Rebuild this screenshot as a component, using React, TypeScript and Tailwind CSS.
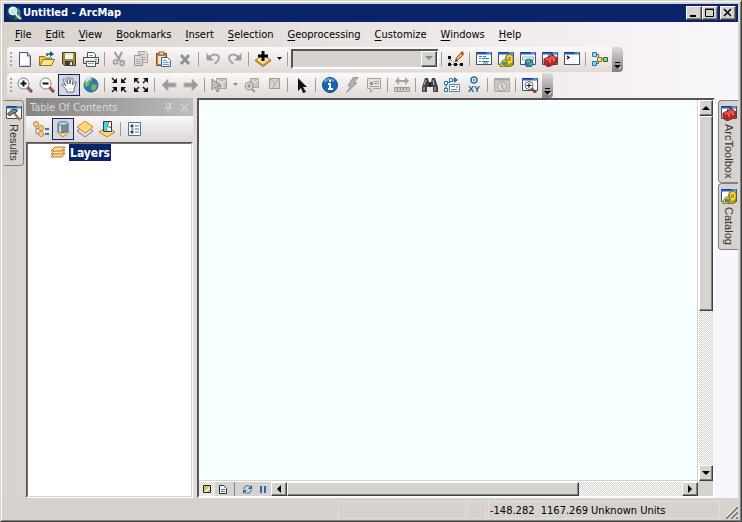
import type { ReactNode } from 'react';

const Svg = ({ children, w = 16, h = 16 }: { children: ReactNode; w?: number; h?: number }) => (
  <svg width={w} height={h} viewBox={`0 0 ${w} ${h}`} fill="none" className="shrink-0" aria-hidden="true">
    {children}
  </svg>
);

const AppIcon = () => (
  <Svg>
    <circle cx="8" cy="8" r="7.500" fill="#123d52" />
    <path d="M2 4l4-3 3 1-3 4-4 3zM10 9l5-1-2 5-4 2z" fill="#2f8a55" />
    <path d="M11 2l3 3v3h-2z" fill="#3b96b5" />
    <circle cx="7" cy="6" r="4" fill="#bfe6f4" stroke="#e8f4f8" />
    <path d="M4.500 5a3 3 0 013-2" stroke="#fff" strokeWidth="1.500" />
    <path d="M10 9l5 5" stroke="#eee8da" strokeWidth="2.500" />
    <path d="M11 9l4 4" stroke="#c87d40" />
  </Svg>
);

const NewIcon = () => (
  <Svg>
    <path d="M2.500 1.500h8l3 3v11h-11z" fill="#f4faff" stroke="#4a5b70" />
    <path d="M4 3h5v10H4z" fill="#fff" />
    <path d="M10.500 1.500v3.500h3.500" fill="#c9d9ea" stroke="#4a5b70" />
    <path d="M12.500 6v8.500H5" stroke="#c1d5e8" />
  </Svg>
);

const OpenIcon = () => (
  <Svg>
    <path d="M.5 14.500v-9h5l1 1.500h6v7.500z" fill="#efc64e" stroke="#957019" />
    <path d="M1 14.500l3-6h11.500l-3 6z" fill="#ffe58c" stroke="#957019" />
    <path d="M8 5V3h4" stroke="#17569b" strokeWidth="1.500" />
    <path d="M11 0l4 3-4 3z" fill="#17569b" />
  </Svg>
);

const SaveIcon = () => (
  <Svg>
    <path d="M1.500 1.500h13v13h-11l-2-2z" fill="#a68b30" stroke="#453f2a" />
    <path d="M4 2h8v6H4z" fill="#f4f4ee" />
    <path d="M4 10h8v5H4z" fill="#3d3e3d" />
    <path d="M9 11h2v3H9z" fill="#eee" />
    <path d="M4 3h8" stroke="#d5d5cc" />
  </Svg>
);

const PrintIcon = () => (
  <Svg>
    <path d="M4.500 7V1.500h6l2 2V7" fill="#fff" stroke="#40566a" />
    <path d="M.5 6.500h15v6H.5z" fill="#d7d6cf" stroke="#454a50" />
    <path d="M1 7h14v2H1z" fill="#f6f5ee" />
    <path d="M3.500 10.500h9v5h-9z" fill="#fff" stroke="#4a5360" />
    <path d="M5 12.500h6M6 4.500h4" stroke="#7f9fc0" />
    <path d="M12 8h2v1h-2z" fill="#47a54b" />
  </Svg>
);

const CutIcon = () => (
  <Svg>
    <path d="M3.500 1L9 10M11 1L7 9" stroke="#9b9996" strokeWidth="2" />
    <circle cx="4.500" cy="11" r="2" stroke="#9b9996" strokeWidth="1.500" />
    <circle cx="11" cy="12.500" r="2" stroke="#9b9996" strokeWidth="1.500" />
    <path d="M7 9l7 1" stroke="#aaa8a5" strokeWidth="1.500" />
  </Svg>
);

const CopyIcon = () => (
  <Svg>
    <path d="M5.500.5h7l2 2v9h-9z" fill="#dedbd8" stroke="#a5a29e" />
    <path d="M1.500 4.500h6l2 2v8h-8z" fill="#dedbd8" stroke="#989693" />
    <path d="M7 3.500h5M10 6.500h3M10 8.500h3M3 8.500h5M3 10.500h5M3 12.500h5" stroke="#aaa7a4" />
  </Svg>
);

const PasteIcon = () => (
  <Svg>
    <path d="M1.500 2.500h10v12h-10z" fill="#cf8034" stroke="#875023" />
    <path d="M4 1h5v3H4z" fill="#ead9a8" stroke="#81643b" />
    <path d="M3 5h7v8H3z" fill="#eee3d2" />
    <path d="M6.500 6.500h6l3 3v6h-9z" fill="#f6fbff" stroke="#376193" />
    <path d="M8 9.500h4M8 11.500h6M8 13.500h6" stroke="#679bd0" />
  </Svg>
);

const DeleteIcon = () => (
  <Svg>
    <path d="M4 4l8 9M12 4l-8 9" stroke="#929292" strokeWidth="3" />
  </Svg>
);

const TurnIcon = ({ redo }: { redo?: boolean }) => (
  <Svg>
    <g transform={redo ? 'translate(16 0) scale(-1 1)' : undefined}>
      <path d="M4 7c4-5 10-4 10 0 0 3-3 4-4 6" stroke="#a5a2a0" strokeWidth="2" />
      <path d="M1.500 2v7.500H9z" fill="#a09d9b" />
    </g>
  </Svg>
);

const AddDataIcon = () => (
  <Svg>
    <path d="M0 9.500l8-6 8 6-8 6z" fill="#e0a13c" stroke="#8f6a2c" />
    <path d="M2 8.500L8 4l6 4.500L8 13z" fill="#ffe29b" />
    <path d="M8 0v10M3 5h10" stroke="#000" strokeWidth="3" />
  </Svg>
);

const EditorIcon = () => (
  <Svg>
    <path d="M1.500 7v6.500h13M2 8l5 5" stroke="#555" strokeDasharray="1 1" />
    <path d="M0 5h3v3H0zM0 12h3v3H0zM6 12h3v3H6zM12 12h3v3h-3z" fill="#111" />
    <path d="M7.500 10.500l1-4 5-5 2 2-5 5z" fill="#eebb52" stroke="#75552a" />
    <path d="M12.500 2l1.500-2 2 2-1.500 2z" fill="#c54038" />
    <path d="M7 11l1-3 2 2z" fill="#333" />
  </Svg>
);

const Frame = () => (
  <>
    <path d="M.5 1.500h15v12H.5z" fill="#fff" stroke="#46505e" />
    <path d="M0 1h16v2.500H0z" fill="#2460bd" />
    <path d="M1 1.500h9" stroke="#173d8e" />
    <path d="M11 2h4" stroke="#8fb5e5" />
  </>
);

const TableIcon = () => (
  <Svg>
    <Frame />
    <path d="M3 5.500h3M7 5.500h3M6 7.500h7M6 10.500h7" stroke="#2875ce" />
    <path d="M3 7.500h2" stroke="#d04237" />
    <path d="M3 10.500h2M7 12h5" stroke="#2c9b4c" />
  </Svg>
);

const CatalogIcon = () => (
  <Svg>
    <Frame />
    <path d="M8 5l4-2 3 2v9l-4 2H7z" fill="#b99f16" stroke="#70610e" />
    <path d="M8.500 5.500l3-2 3 1.500v6l-4 2z" fill="#f1dc4c" />
    <path d="M10 7h3M10 9h3" stroke="#756713" />
    <path d="M2 13l3-4h4l-1 5-3 1.500H2z" fill="#dfc931" stroke="#8f801a" />
    <path d="M4 11h4v3H4z" fill="#2d94a3" />
  </Svg>
);

const SearchIcon = () => (
  <Svg>
    <Frame />
    <path d="M2.500 6h11v3h-11z" fill="#eef5fb" stroke="#8dabc6" />
    <circle cx="9" cy="12" r="4" fill="#267ac1" stroke="#24639a" />
    <path d="M6 10l3-2 1 2-2 2zM9 13l3-2v3l-2 1z" fill="#68bc56" />
  </Svg>
);

const ToolboxIcon = () => (
  <Svg>
    <Frame />
    <path d="M2 8l9-4 4 3v5l-9 4-4-3z" fill="#be2b25" stroke="#85231f" />
    <path d="M2.500 8l8-3.500 4 2.500L6 10z" fill="#e0554b" />
    <path d="M6.500 7V4.500l4-1.500v2" stroke="#792621" />
    <path d="M6 10v5" stroke="#8f211d" />
    <path d="M8 9.500v2M12 8v2" stroke="#f2c5bd" />
  </Svg>
);

const PythonIcon = () => (
  <Svg>
    <Frame />
    <path d="M3 5l2 1.500L3 8" stroke="#111" strokeWidth="1.500" />
  </Svg>
);

const ModelIcon = () => (
  <Svg>
    <path d="M5 3.500h1.500v9H5M7 8h6" stroke="#4e5354" />
    <path d="M.5 1.500h4v4h-4zM.5 10.500h4v4h-4z" fill="#8cd4fb" stroke="#1f76b9" />
    <path d="M5.500 6.500h4v4h-4z" fill="#ffe58c" stroke="#9a691f" />
    <path d="M11.500 6.500h4v4h-4z" fill="#8ad171" stroke="#247335" />
  </Svg>
);

const MagnifierIcon = ({ plus }: { plus?: boolean }) => (
  <Svg>
    <path d="M10 10l5 5" stroke="#783c38" strokeWidth="3" />
    <path d="M10 10l4 4" stroke="#d28a79" />
    <circle cx="6.500" cy="6.500" r="5.500" fill="#fafcff" stroke="#777d87" />
    <path d="M3.500 6.500h6" stroke="#111" strokeWidth="2" />
    {plus && <path d="M6.500 3.500v6" stroke="#111" strokeWidth="2" />}
  </Svg>
);

const HandIcon = () => (
  <Svg>
    <path
      d="M6 15c0-3-2-4-5-7 0-2 2-1 4 1L2 3c0-2 2-1 2 0l3 4-1-6c0-1 2-1 2 0l1 6 1-5c0-2 2-1 2 0l-.5 6L14 5c1-1 2 0 1 1l-2 6v3z"
      fill="#fff"
      stroke="#4b5160"
      strokeWidth=".8"
    />
    <path d="M7 12h4" stroke="#c6cdd8" />
  </Svg>
);

const GlobeIcon = () => (
  <Svg>
    <circle cx="8" cy="8" r="7" fill="#2a77be" stroke="#2b5d90" />
    <path d="M3 3l4-2 3 2-3 2-1 3-3 2-2-3zM9 7l5 1-1 4-3 2-2-3z" fill="#79b84b" />
    <path d="M3 5c1-3 4-4 5-3" stroke="#c3e9fa" strokeWidth="2" />
  </Svg>
);

const ArrowsIcon = ({ out }: { out?: boolean }) => (
  <Svg>
    {[0, 90, 180, 270].map((angle) => (
      <g key={angle} transform={`rotate(${angle} 8 8)`}>
        {out ? (
          <>
            <path d="M1 1h5L1 6z" fill="#111" />
            <path d="M3 3l3 3" stroke="#111" strokeWidth="1.500" />
          </>
        ) : (
          <>
            <path d="M6 1v5H1z" fill="#111" />
            <path d="M1 1l4 4" stroke="#111" strokeWidth="1.500" />
          </>
        )}
      </g>
    ))}
  </Svg>
);

const NavIcon = ({ next }: { next?: boolean }) => (
  <Svg>
    <path
      d="M1 8l6-6v4h8v4H7v4z"
      fill="#9c9b99"
      stroke="#b8b5b2"
      transform={next ? 'translate(16 0) scale(-1 1)' : undefined}
    />
  </Svg>
);

const SelectFeaturesIcon = () => (
  <Svg>
    <path d="M5.500 1.500h10v10h-10z" fill="#c4c1bd" stroke="#a5a29f" />
    <path d="M6 3l5 3 4-3M11 6l1 5" stroke="#e6e3e0" strokeWidth="1.500" />
    <path d="M1 2v11l3-3 2 5 2-1-2-5h4z" fill="#c6c3c0" stroke="#8b8885" />
  </Svg>
);

const ZoomSelectedIcon = () => (
  <Svg>
    <path d="M6.500 1.500h8v9h-8z" fill="#c9c6c2" stroke="#aaa7a4" />
    <path d="M8 2l3 4 3-3" stroke="#eee" />
    <circle cx="5" cy="9" r="4" fill="#dddad7" stroke="#989693" />
    <path d="M8 12l3 3" stroke="#989693" strokeWidth="2" />
    <path d="M3 9h4M5 7v4" stroke="#888683" />
  </Svg>
);

const ClearSelectedIcon = () => (
  <Svg>
    <path d="M3.500 1.500h10v10h-10z" fill="#d8d5d1" stroke="#9f9c99" />
    <path d="M4 2l5 4 4-4M9 6l-2 5" stroke="#a5a29f" />
  </Svg>
);

const PointerIcon = () => (
  <Svg>
    <path d="M4 1v13l3-3 2 5 3-1-3-5h4z" fill="#111" />
  </Svg>
);

const InfoIcon = () => (
  <Svg>
    <circle cx="8" cy="8" r="7.500" fill="#1c63b7" stroke="#174a86" />
    <path d="M3 5c1-3 6-4 9-1" stroke="#6ca8e4" strokeWidth="2" />
    <path d="M8 3v2M6 7h2v5M6 12h5" stroke="#fff" strokeWidth="2" />
  </Svg>
);

const BoltIcon = () => (
  <Svg>
    <path d="M9 .5h5L10 6h3L2.500 15.500 7 9H4z" fill="#b3b0ae" stroke="#9b9896" />
  </Svg>
);

const PopupIcon = () => (
  <Svg>
    <path d="M1.500 1.500h13v10h-7l-3 4v-4h-3z" fill="#e4e1de" stroke="#a4a19e" />
    <path d="M4 5h3v3H4z" fill="#999693" />
    <path d="M8 4.500h5M8 6.500h5M4 9.500h9" stroke="#a4a19e" />
  </Svg>
);

const MeasureIcon = () => (
  <Svg>
    <path d="M1 4l4-4v3h6V0l4 4-4 4V5H5v3z" fill="#a6a3a0" />
    <path d="M.5 10.500h15v4H.5z" fill="#cbc7c3" stroke="#9e9b98" />
    <path d="M3.500 11v2M6.500 11v2M9.500 11v2M12.500 11v2" stroke="#8f8c89" />
  </Svg>
);

const BinocularsIcon = () => (
  <Svg>
    <path d="M3 1h3l1 4h2l1-4h3l3 9v5h-5v-5H5v5H0v-5z" fill="#414446" />
    <path d="M2 10v4M4 3L2 8M13 10v4M11 3l1 5" stroke="#bfc4c6" />
    <path d="M7 6h2v4H7z" fill="#1c1d1e" />
  </Svg>
);

const RouteIcon = () => (
  <Svg>
    <path d="M2 12V5.500h4V3h6" stroke="#2671a8" />
    <path d="M10 0l4 3-4 3z" fill="#2671a8" />
    <path d="M.5 11.500h3v3h-3zM.5 4.500h3v3h-3zM5.500 1.500h3v3h-3z" fill="#fff" stroke="#2671a8" />
    <path d="M5.500 7.500h10v7h-10z" fill="#fff" stroke="#52879f" />
    <path d="M7 9.500h4M7 12.500h6" stroke="#4d8fbf" />
    <path d="M12 9h2v2h-2z" fill="#dea45b" />
  </Svg>
);

const XYIcon = () => (
  <span className="flex flex-col items-center font-['Liberation_Sans',sans-serif] text-[9px] leading-[10px] font-bold text-[#155b91]">
    <Svg w={8} h={8}>
      <circle cx="4" cy="4" r="3" stroke="#2674aa" strokeWidth="1.500" />
      <circle cx="4" cy="4" r="1" fill="#2674aa" />
    </Svg>
    XY
  </span>
);

const TimeIcon = () => (
  <Svg>
    <path d="M.5 1.500h15v13H.5z" fill="#d0cdc9" stroke="#aaa7a4" />
    <path d="M1 2.500h14" stroke="#aaa7a4" strokeWidth="2" />
    <circle cx="8" cy="9.500" r="4.500" fill="#dedbd7" stroke="#9e9b98" />
    <path d="M8 7v3l2 2" stroke="#8e8b88" />
  </Svg>
);

const ViewerIcon = () => (
  <Svg>
    <Frame />
    <path d="M9 11l5 5" stroke="#8a4339" strokeWidth="2.500" />
    <circle cx="7" cy="8.500" r="4" fill="#fff" stroke="#596673" />
    <path d="M4.500 8.500h5M7 6v5" stroke="#111" />
  </Svg>
);

const HammerIcon = () => (
  <Svg>
    <Frame />
    <path d="M8 8l6 7" stroke="#b0714c" strokeWidth="2.500" />
    <path d="M1.500 9l5-5 5 1-1 2-3 1-4 3z" fill="#85888b" stroke="#35383a" />
  </Svg>
);

const DrawingOrderIcon = () => (
  <Svg>
    <path d="M3 4v8.500h3M3 7.500h4" stroke="#85898d" />
    <circle cx="3" cy="3" r="2.500" fill="#f6d18a" stroke="#bd8333" />
    <circle cx="8" cy="7" r="2.500" fill="#f6d18a" stroke="#bd8333" />
    <circle cx="8" cy="13" r="2.500" fill="#f6d18a" stroke="#bd8333" />
    <path d="M12 8h4M12 13h4" stroke="#3f789f" strokeWidth="2" />
  </Svg>
);

const SourceIcon = () => (
  <Svg>
    <path d="M2 11l6-3 6 3-6 5z" fill="#ffd672" stroke="#b68027" />
    <path d="M3 2v8c2 2 8 2 10 0V2z" fill="#718d9f" stroke="#526e80" />
    <path d="M5 3v8" stroke="#c9e1f0" strokeWidth="2" />
    <ellipse cx="8" cy="2.500" rx="5" ry="2" fill="#b9cddb" stroke="#617d91" />
  </Svg>
);

const VisibilityIcon = () => (
  <Svg>
    <path d="M0 10l8-6 8 6-8 6z" fill="#dfdfdd" stroke="#77797b" />
    <path d="M0 6l8-6 8 6-8 6z" fill="#ffd67c" stroke="#c58a35" />
  </Svg>
);

const SelectionIcon = () => (
  <Svg>
    <path d="M0 11l8-5 8 5-8 5z" fill="#ffd672" stroke="#b68027" />
    <path d="M4.500.5h8v10h-8z" fill="#fff" stroke="#33383c" />
    <path d="M5 1h4L7.500 5l1 2v3H5z" fill="#38d7e1" />
    <path d="M10 1L8 5.500l4 1" stroke="#4c666a" />
  </Svg>
);

const OptionsIcon = () => (
  <Svg w={14} h={16}>
    <path d="M.5 1.500h12v13H.5z" fill="#fff" stroke="#48769b" />
    <path d="M3 4h2v2H3zM3 10h2v2H3z" fill="#34485a" stroke="#34485a" />
    <path d="M7 5h4M3 8h3M7 8h4M7 11h4" stroke="#5a6b7a" />
  </Svg>
);

const LayersIcon = () => (
  <Svg>
    {[9, 6, 3].map((y) => (
      <path key={y} d={`M1 ${y + 3}l4-4h10l-3 4z`} fill="#ffdc9a" stroke="#ba7a31" />
    ))}
  </Svg>
);

const Triangle = ({ dir }: { dir: 'up' | 'down' | 'left' | 'right' }) => {
  const paths = { up: 'M0 6h8L4 2z', down: 'M0 2h8L4 6z', left: 'M6 0v8L2 4z', right: 'M2 0v8l4-4z' };
  return (
    <Svg w={8} h={8}>
      <path d={paths[dir]} fill="#000" />
    </Svg>
  );
};

const raised = 'border border-t-white border-l-white border-r-[#404040] border-b-[#404040] shadow-[inset_-1px_-1px_#808080]';
const track = 'bg-[repeating-conic-gradient(#ffffff_0_25%,#d6d2cd_0_50%)] bg-[length:2px_2px]';

const Tool = ({ label, children, active }: { label: string; children: ReactNode; active?: boolean }) => (
  <button
    type="button"
    aria-label={label}
    className={`flex h-[22px] w-[22px] shrink-0 items-center justify-center ${
      active ? 'border border-[#0a246a] bg-[#d3d5df]' : ''
    }`}
  >
    {children}
  </button>
);

const Sep = () => (
  <span className="flex w-[6px] shrink-0 pl-[2px]">
    <span className="h-[14px] w-px bg-[#a09c9a]" />
  </span>
);

const Grip = () => (
  <span className="flex w-[7px] shrink-0 flex-col items-center gap-[2px]">
    {[0, 1, 2, 3].map((dot) => (
      <span key={dot} className="h-[2px] w-[2px] bg-[#a5a19f]" />
    ))}
  </span>
);

const Caret = ({ label, muted }: { label: string; muted?: boolean }) => (
  <button type="button" aria-label={label} className="flex h-[22px] w-[11px] shrink-0 items-center justify-center">
    <Svg w={5} h={3}>
      <path d="M0 0h5L2.500 3z" fill={muted ? '#8c8986' : '#000'} />
    </Svg>
  </button>
);

const Overflow = () => (
  <button
    type="button"
    aria-label="Toolbar options"
    className="ml-px flex w-[11px] shrink-0 items-end justify-center rounded-r-sm bg-linear-to-b from-[#dedbda] to-[#817e7c] pb-[3px]"
  >
    <Svg w={7} h={7}>
      <path d="M1 .5h5" stroke="#000" />
      <path d="M0 3h7L3.500 6.500z" fill="#000" />
      <path d="M4.500 7L7.500 4" stroke="#fff" />
    </Svg>
  </button>
);

const ToolbarRow = ({ label, children }: { label: string; children: ReactNode }) => (
  <div
    role="toolbar"
    aria-label={label}
    className="ml-[3px] flex h-[25px] w-fit rounded-sm bg-linear-to-b from-[#fbf8f8] to-[#e0dad7]"
  >
    <div className="flex items-center pb-[2px]">
      <Grip />
      {children}
    </div>
    <Overflow />
  </div>
);

const menus = ['File', 'Edit', 'View', 'Bookmarks', 'Insert', 'Selection', 'Geoprocessing', 'Customize', 'Windows', 'Help'];

const TitleBar = () => (
  <header className="flex h-[18px] shrink-0 items-center bg-[#0a246a] pr-[2px] pl-[2px] text-white">
    <AppIcon />
    <h1 className="ml-px grow text-[11px] font-bold">Untitled - ArcMap</h1>
    <button type="button" aria-label="Minimize" className={`flex h-[14px] w-4 items-center justify-center bg-[#d6d2cd] ${raised}`}>
      <Svg w={10} h={10}>
        <path d="M1 8h6" stroke="#000" strokeWidth="2" />
      </Svg>
    </button>
    <button type="button" aria-label="Maximize" className={`flex h-[14px] w-4 items-center justify-center bg-[#d6d2cd] ${raised}`}>
      <Svg w={10} h={10}>
        <path d="M.5 1.500h8v7h-8zM0 1h9" stroke="#000" />
      </Svg>
    </button>
    <button type="button" aria-label="Close" className={`ml-[2px] flex h-[14px] w-4 items-center justify-center bg-[#d6d2cd] ${raised}`}>
      <Svg w={10} h={10}>
        <path d="M1 1l7 7M8 1L1 8" stroke="#000" strokeWidth="1.500" />
      </Svg>
    </button>
  </header>
);

const MenuBar = () => (
  <nav className="flex h-[25px] shrink-0 items-center pt-px pl-1">
    {menus.map((menu) => (
      <button key={menu} type="button" className="px-[7px]">
        <span className="underline underline-offset-2">{menu[0]}</span>
        {menu.slice(1)}
      </button>
    ))}
  </nav>
);

const StandardToolbar = () => (
  <ToolbarRow label="Standard">
    <Tool label="New"><NewIcon /></Tool>
    <Tool label="Open"><OpenIcon /></Tool>
    <Tool label="Save"><SaveIcon /></Tool>
    <Tool label="Print"><PrintIcon /></Tool>
    <Sep />
    <Tool label="Cut"><CutIcon /></Tool>
    <Tool label="Copy"><CopyIcon /></Tool>
    <Tool label="Paste"><PasteIcon /></Tool>
    <Tool label="Delete"><DeleteIcon /></Tool>
    <Sep />
    <Tool label="Undo"><TurnIcon /></Tool>
    <Tool label="Redo"><TurnIcon redo /></Tool>
    <Sep />
    <Tool label="Add Data"><AddDataIcon /></Tool>
    <Caret label="Add Data options" />
    <Sep />
    <div className="relative h-5 w-[148px] shrink-0">
      <select
        aria-label="Map Scale"
        disabled
        className="h-5 w-full appearance-none border-2 border-t-[#555] border-r-white border-b-white border-l-[#555] bg-[#d6d2cd]"
      />
      <span className={`pointer-events-none absolute top-[2px] right-[2px] flex h-4 w-4 items-center justify-center bg-[#d6d2cd] ${raised}`}>
        <Svg w={8} h={5}>
          <path d="M0 0h8L4 4z" fill="#858381" />
        </Svg>
      </span>
    </div>
    <Sep />
    <Tool label="Editor Toolbar"><EditorIcon /></Tool>
    <Sep />
    <Tool label="Table Of Contents"><TableIcon /></Tool>
    <Tool label="Catalog"><CatalogIcon /></Tool>
    <Tool label="Search"><SearchIcon /></Tool>
    <Tool label="ArcToolbox"><ToolboxIcon /></Tool>
    <Tool label="Python"><PythonIcon /></Tool>
    <Sep />
    <Tool label="ModelBuilder"><ModelIcon /></Tool>
  </ToolbarRow>
);

const ToolsToolbar = () => (
  <ToolbarRow label="Tools">
    <Tool label="Zoom In"><MagnifierIcon plus /></Tool>
    <Tool label="Zoom Out"><MagnifierIcon /></Tool>
    <Tool label="Pan" active><HandIcon /></Tool>
    <Tool label="Full Extent"><GlobeIcon /></Tool>
    <Sep />
    <Tool label="Fixed Zoom In"><ArrowsIcon /></Tool>
    <Tool label="Fixed Zoom Out"><ArrowsIcon out /></Tool>
    <Sep />
    <Tool label="Back"><NavIcon /></Tool>
    <Tool label="Forward"><NavIcon next /></Tool>
    <Sep />
    <Tool label="Select Features"><SelectFeaturesIcon /></Tool>
    <Caret label="Select Features options" muted />
    <Tool label="Zoom To Selected"><ZoomSelectedIcon /></Tool>
    <Tool label="Clear Selected"><ClearSelectedIcon /></Tool>
    <Sep />
    <Tool label="Select Elements"><PointerIcon /></Tool>
    <Sep />
    <Tool label="Identify"><InfoIcon /></Tool>
    <Tool label="Hyperlink"><BoltIcon /></Tool>
    <Tool label="HTML Popup"><PopupIcon /></Tool>
    <Sep />
    <Tool label="Measure"><MeasureIcon /></Tool>
    <Sep />
    <Tool label="Find"><BinocularsIcon /></Tool>
    <Tool label="Find Route"><RouteIcon /></Tool>
    <Tool label="Go To XY"><XYIcon /></Tool>
    <Sep />
    <Tool label="Time Slider"><TimeIcon /></Tool>
    <Sep />
    <Tool label="Create Viewer Window"><ViewerIcon /></Tool>
  </ToolbarRow>
);

const SideTab = ({ label, icon, side }: { label: string; icon: ReactNode; side: 'left' | 'right' }) => (
  <button
    type="button"
    className={`flex w-5 flex-col items-center gap-[3px] border border-[#85817e] bg-[#d6d2cd] pt-1 pb-1 font-['Liberation_Sans',sans-serif] text-[11px] leading-4 text-[#333] ${
      side === 'left' ? 'rounded-r border-l-0' : 'rounded-l border-r-0'
    }`}
  >
    {icon}
    <span className="[writing-mode:vertical-rl]">{label}</span>
  </button>
);

const TableOfContents = () => (
  <section className="flex w-[167px] shrink-0 flex-col">
    <div className="flex h-[18px] shrink-0 items-center bg-linear-to-r from-[#858383] to-[#bebbbb] px-1 pt-px text-[#dedbd8]">
      <h2 className="grow">Table Of Contents</h2>
      <button type="button" aria-label="Pin" className="mr-2">
        <Svg w={8} h={10}>
          <path d="M2.500 5V.5h4V5M0 5.500h8M4 6v4M5.500 1v4" stroke="#d6d3d0" />
        </Svg>
      </button>
      <button type="button" aria-label="Close Table Of Contents">
        <Svg w={9} h={9}>
          <path d="M1 1l7 7M8 1L1 8" stroke="#d6d3d0" strokeWidth="1.500" />
        </Svg>
      </button>
    </div>
    <div className="flex h-[26px] shrink-0 items-center bg-linear-to-b from-[#fbf8f8] to-[#ded8d6] pl-1">
      <Tool label="List By Drawing Order"><DrawingOrderIcon /></Tool>
      <Tool label="List By Source" active><SourceIcon /></Tool>
      <Tool label="List By Visibility"><VisibilityIcon /></Tool>
      <Tool label="List By Selection"><SelectionIcon /></Tool>
      <Sep />
      <Tool label="Options"><OptionsIcon /></Tool>
    </div>
    <div className="min-h-0 grow border border-t-[#555] border-r-white border-b-white border-l-[#555] bg-white pl-[23px] shadow-[inset_-1px_-1px_#d6d2cd,inset_1px_1px_#77716e]">
      <div className="mt-px flex items-center gap-[3px]">
        <LayersIcon />
        <button type="button" className="h-[17px] bg-[#0a246a] px-px text-[12px] font-bold text-white">Layers</button>
      </div>
    </div>
  </section>
);

const MapView = () => (
  <main className="flex min-w-0 grow border-2 border-t-[#555] border-r-white border-b-white border-l-[#555] bg-[#d6d2cd]">
    <div className="flex min-w-0 grow flex-col">
      <div className="grow border-r border-b border-[#d6d2cd] bg-[#f7ffff]" />
      <div className="flex h-[15px] shrink-0 items-stretch border-t border-white">
        <button type="button" aria-label="Data View" className={`flex w-4 shrink-0 items-center justify-center ${track}`}>
          <Svg w={8} h={8}>
            <path d="M.5.5h7v7h-7z" fill="#a9cf74" stroke="#222" />
            <path d="M1 7l6-6v3L4 7z" fill="#f7f0ae" />
          </Svg>
        </button>
        <button type="button" aria-label="Layout View" className="flex w-4 shrink-0 items-center justify-center">
          <Svg w={8} h={9}>
            <path d="M.5.5h4l3 3v5h-7z" fill="#fff" stroke="#16384e" />
            <path d="M2 4.500h4M2 6.500h4" stroke="#3084b5" />
          </Svg>
        </button>
        <span className="mr-1 ml-[3px] w-px shrink-0 bg-[#858381]" />
        <button type="button" aria-label="Refresh" className="flex w-4 shrink-0 items-center justify-center">
          <Svg w={9} h={9}>
            <path d="M1 4c0-4 5-4 6-2M8 5c0 4-5 4-6 2" stroke="#1965a8" />
            <path d="M9 0v4H5zM0 9V5h4z" fill="#1965a8" />
          </Svg>
        </button>
        <button type="button" aria-label="Pause Drawing" className="flex w-4 shrink-0 items-center justify-center">
          <Svg w={6} h={7}>
            <path d="M1 0v7M5 0v7" stroke="#2967b2" strokeWidth="2" />
          </Svg>
        </button>
        <div className="flex min-w-0 grow">
          <button type="button" aria-label="Scroll left" className={`flex w-4 shrink-0 items-center justify-center ${raised}`}>
            <Triangle dir="left" />
          </button>
          <div className={`min-w-0 grow ${track}`}>
            <div className={`h-full w-[74%] bg-[#d6d2cd] ${raised}`} />
          </div>
          <button type="button" aria-label="Scroll right" className={`flex w-4 shrink-0 items-center justify-center ${raised}`}>
            <Triangle dir="right" />
          </button>
        </div>
      </div>
    </div>
    <div className="mb-[15px] flex w-[15px] shrink-0 flex-col border-l border-white">
      <button type="button" aria-label="Scroll up" className={`flex h-4 shrink-0 items-center justify-center ${raised}`}>
        <Triangle dir="up" />
      </button>
      <div className={`min-h-0 grow ${track}`}>
        <div className={`h-[56%] bg-[#d6d2cd] ${raised}`} />
      </div>
      <button type="button" aria-label="Scroll down" className={`flex h-4 shrink-0 items-center justify-center ${raised}`}>
        <Triangle dir="down" />
      </button>
    </div>
  </main>
);

const StatusBar = () => (
  <footer className="flex h-[21px] shrink-0 items-end justify-end gap-[2px] bg-[#d6d2cd]">
    <div className="h-[18px] w-32 border border-[#e2ddda]" />
    <div className="h-[18px] w-[18px] border border-[#e2ddda]" />
    <div className="flex h-[18px] w-[232px] items-center border border-[#e2ddda] px-px pt-px whitespace-pre">
      -148.282  1167.269 Unknown Units
    </div>
    <span className="ml-1">
      <Svg w={12} h={14}>
        <path d="M0 14L12 2M5 14l7-7M10 14l2-2" stroke="#858183" strokeWidth="2" />
        <path d="M-1 13L12 0M3 14l9-9M8 14l4-4" stroke="#fff" />
      </Svg>
    </span>
  </footer>
);

export default function App() {
  return (
    <div className="flex h-screen flex-col border border-t-[#d6d2cd] border-r-[#404040] border-b-[#404040] border-l-[#d6d2cd] bg-[#d6d2cd] font-['DejaVu_Sans_Condensed','DejaVu_Sans',sans-serif] text-[11px] leading-4 text-black">
      <div className="flex min-h-0 grow flex-col border border-t-white border-r-[#808080] border-b-[#808080] border-l-white px-[2px] pt-[2px] pb-px">
        <TitleBar />
        <div className="flex min-h-0 grow flex-col bg-linear-to-r from-[#d9d2cd] via-[#eae4e3] to-[#faf7fc]">
          <MenuBar />
          <div className="flex shrink-0 flex-col gap-px">
            <StandardToolbar />
            <ToolsToolbar />
          </div>
          <div className="flex min-h-0 grow">
            <aside className="w-[22px] shrink-0 pt-[2px]">
              <SideTab label="Results" icon={<HammerIcon />} side="left" />
            </aside>
            <TableOfContents />
            <div className="w-1 shrink-0" />
            <MapView />
            <aside className="flex w-[23px] shrink-0 flex-col items-end pt-[2px]">
              <SideTab label="ArcToolbox" icon={<ToolboxIcon />} side="right" />
              <SideTab label="Catalog" icon={<CatalogIcon />} side="right" />
            </aside>
          </div>
        </div>
        <StatusBar />
      </div>
    </div>
  );
}
